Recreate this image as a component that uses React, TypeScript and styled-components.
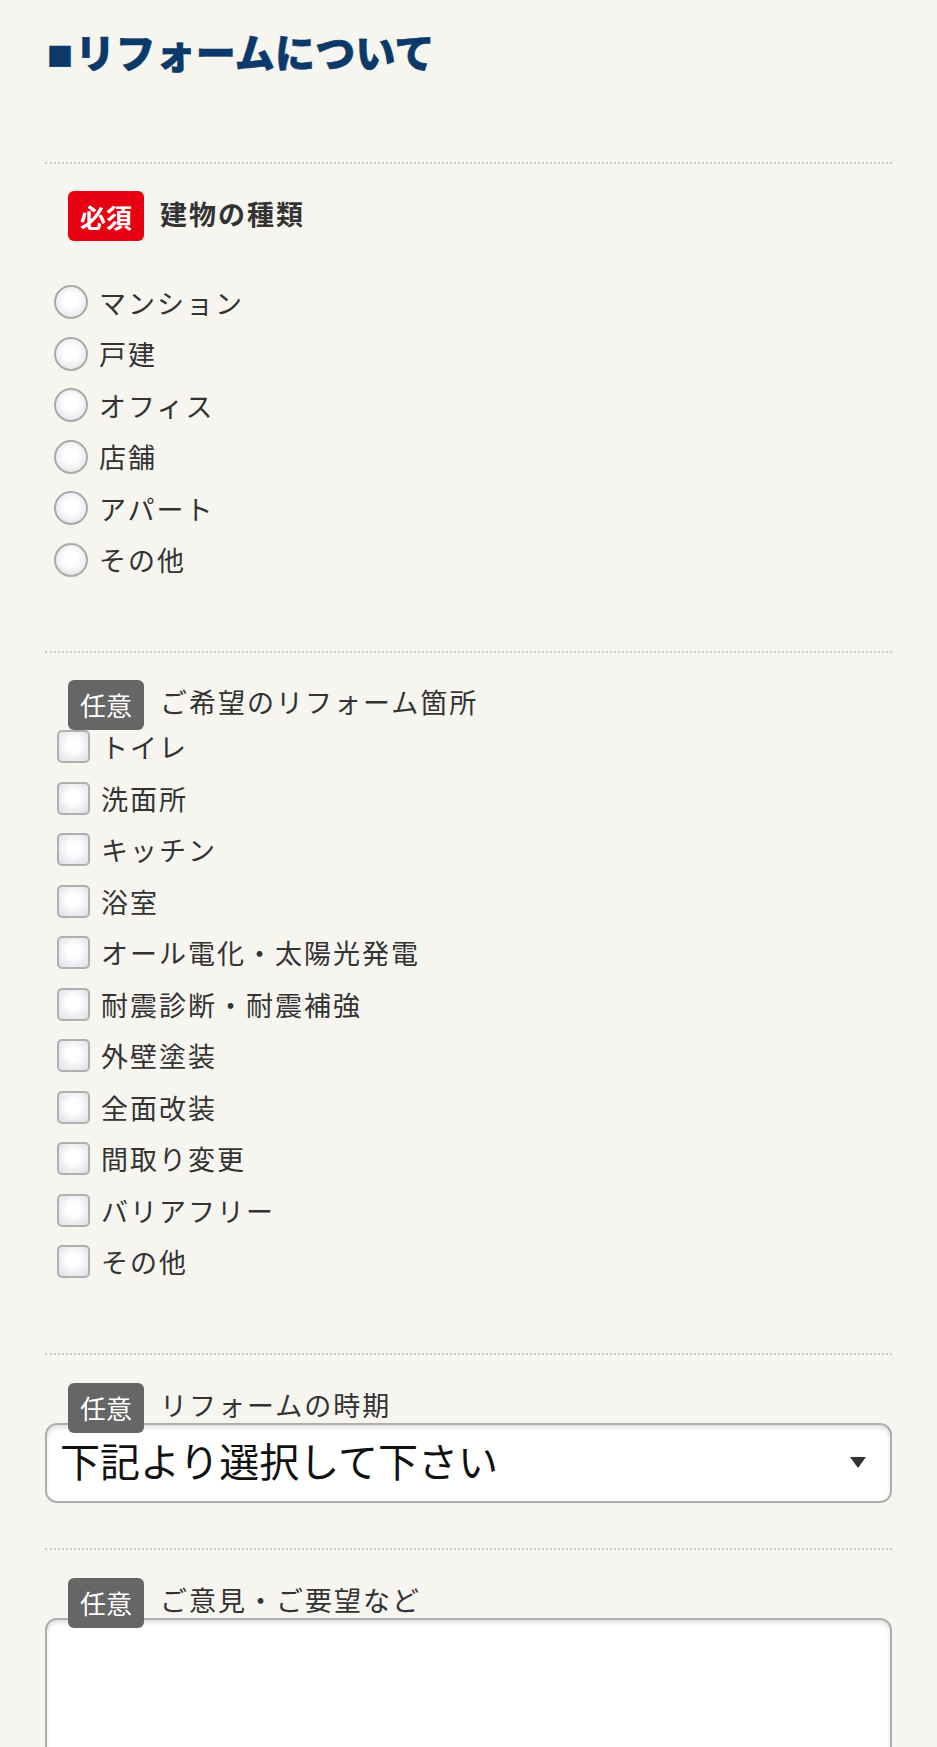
import React from "react";
import styled, { createGlobalStyle } from "styled-components";

const GlobalStyle = createGlobalStyle`
    html, body {
        margin: 0;
        padding: 0;
        background: #f6f5ef;
    }
    body {
        font-family: "Noto Sans CJK JP", "Noto Sans", sans-serif;
        color: #333;
    }
`

const buildingTypes = ["マンション", "戸建", "オフィス", "店舗", "アパート", "その他"]

const reformPlaces = [
    "トイレ",
    "洗面所",
    "キッチン",
    "浴室",
    "オール電化・太陽光発電",
    "耐震診断・耐震補強",
    "外壁塗装",
    "全面改装",
    "間取り変更",
    "バリアフリー",
    "その他",
]

export default function App() {
    return (
        <Page>
            <GlobalStyle />
            <Title>
                <Square>■</Square>リフォームについて
            </Title>

            <Divider />
            <Section>
                <FieldHead>
                    <Badge required>必須</Badge>
                    <FieldLabel bold>建物の種類</FieldLabel>
                </FieldHead>
                <OptionList gapTop={44}>
                    {buildingTypes.map((type) => (
                        <Option key={type}>
                            <Radio type="radio" name="building" />
                            <OptionText>{type}</OptionText>
                        </Option>
                    ))}
                </OptionList>
            </Section>

            <Divider />
            <Section>
                <FieldHead>
                    <Badge>任意</Badge>
                    <FieldLabel>ご希望のリフォーム箇所</FieldLabel>
                </FieldHead>
                <OptionList gapTop={0}>
                    {reformPlaces.map((place, i) => (
                        <Option key={place + i}>
                            <Check type="checkbox" />
                            <OptionText>{place}</OptionText>
                        </Option>
                    ))}
                </OptionList>
            </Section>

            <Divider />
            <SectionTight>
                <FieldHead>
                    <Badge>任意</Badge>
                    <FieldLabel>リフォームの時期</FieldLabel>
                </FieldHead>
                <SelectBox>
                    <SelectText>下記より選択して下さい</SelectText>
                    <Arrow />
                </SelectBox>
            </SectionTight>

            <Divider />
            <SectionTight>
                <FieldHead>
                    <Badge>任意</Badge>
                    <FieldLabel>ご意見・ご要望など</FieldLabel>
                </FieldHead>
                <TextArea />
            </SectionTight>
        </Page>
    )
}

const Page = styled.div`
    width: 937px;
    box-sizing: border-box;
    padding: 0 45px;
    height: 1747px;
    overflow: hidden;
`

const Title = styled.h2`
    margin: 0;
    padding: 26px 0 0 2px;
    height: 50px;
    line-height: 50px;
    font-size: 40px;
    font-weight: 900;
    color: #0b3a6a;
    letter-spacing: 0.2px;
    margin-bottom: 86px;
    -webkit-text-stroke: 0.6px #0b3a6a;
`

const Square = styled.span`
    font-size: 26px;
    margin-right: 2px;
    vertical-align: 2px;
`

const Divider = styled.hr`
    margin: 0;
    border: 0;
    border-top: 2px dotted #cfcdc8;
    height: 0;
`

const Section = styled.section`
    padding-top: 27px;
    padding-bottom: 74px;
`

const SectionTight = styled.section`
    padding-top: 28px;
    padding-bottom: 45px;
`

const FieldHead = styled.div`
    display: flex;
    align-items: center;
    height: 50px;
    padding-left: 23px;
    position: relative;
    z-index: 1;
`

const Badge = styled.span<{ required?: boolean }>`
    display: flex;
    align-items: center;
    justify-content: center;
    width: 76px;
    height: 50px;
    border-radius: 6px;
    background: ${(p) => (p.required ? "#e60012" : "#666")};
    color: #fff;
    font-size: 26px;
    font-weight: ${(p) => (p.required ? 700 : 400)};
    box-sizing: border-box;
`

const FieldLabel = styled.span<{ bold?: boolean }>`
    margin-left: 16px;
    margin-top: -6px;
    font-size: 27px;
    letter-spacing: 2px;
    font-weight: ${(p) => (p.bold ? 700 : 400)};
    color: #333;
`

const OptionList = styled.ul<{ gapTop: number }>`
    list-style: none;
    margin: ${(p) => p.gapTop}px 0 0 0;
    padding: 0 0 0 9px;
    display: flex;
    flex-direction: column;
    gap: 17.5px;
`

const Option = styled.li`
    display: flex;
    align-items: center;
    height: 34px;
`

const Radio = styled.input`
    appearance: none;
    margin: 0;
    width: 34px;
    height: 34px;
    border-radius: 50%;
    border: 2px solid #aaaaaa;
    box-sizing: border-box;
    background: radial-gradient(circle at 50% 45%, #ffffff 30%, #dcdce4 100%);
    flex-shrink: 0;
`

const Check = styled.input`
    appearance: none;
    margin: 0 0 0 3px;
    width: 33px;
    height: 33px;
    border-radius: 5px;
    border: 2px solid #b0b0b0;
    box-sizing: border-box;
    background: radial-gradient(circle at 50% 45%, #ffffff 30%, #dcdce4 100%);
    flex-shrink: 0;
`

const OptionText = styled.span`
    margin-left: 11px;
    font-size: 27px;
    letter-spacing: 2px;
    color: #333;
`

const SelectBox = styled.div`
    position: relative;
    margin-top: -10px;
    height: 80px;
    box-sizing: border-box;
    border: 2px solid #aeaeae;
    border-radius: 12px;
    background: #fff;
    box-shadow: inset 0 3px 4px rgba(0, 0, 0, 0.12);
    display: flex;
    align-items: center;
    justify-content: space-between;
    padding: 0 24px 0 13px;
`

const SelectText = styled.span`
    font-size: 40px;
    color: #111;
    padding-bottom: 6px;
`

const Arrow = styled.span`
    width: 0;
    height: 0;
    border-left: 8px solid transparent;
    border-right: 8px solid transparent;
    border-top: 11px solid #333;
`

const TextArea = styled.textarea`
    display: block;
    width: 100%;
    margin-top: -10px;
    height: 260px;
    box-sizing: border-box;
    border: 2px solid #aeaeae;
    border-radius: 12px;
    background: #fff;
    box-shadow: inset 0 3px 4px rgba(0, 0, 0, 0.12);
    resize: none;
    font-family: inherit;
`
